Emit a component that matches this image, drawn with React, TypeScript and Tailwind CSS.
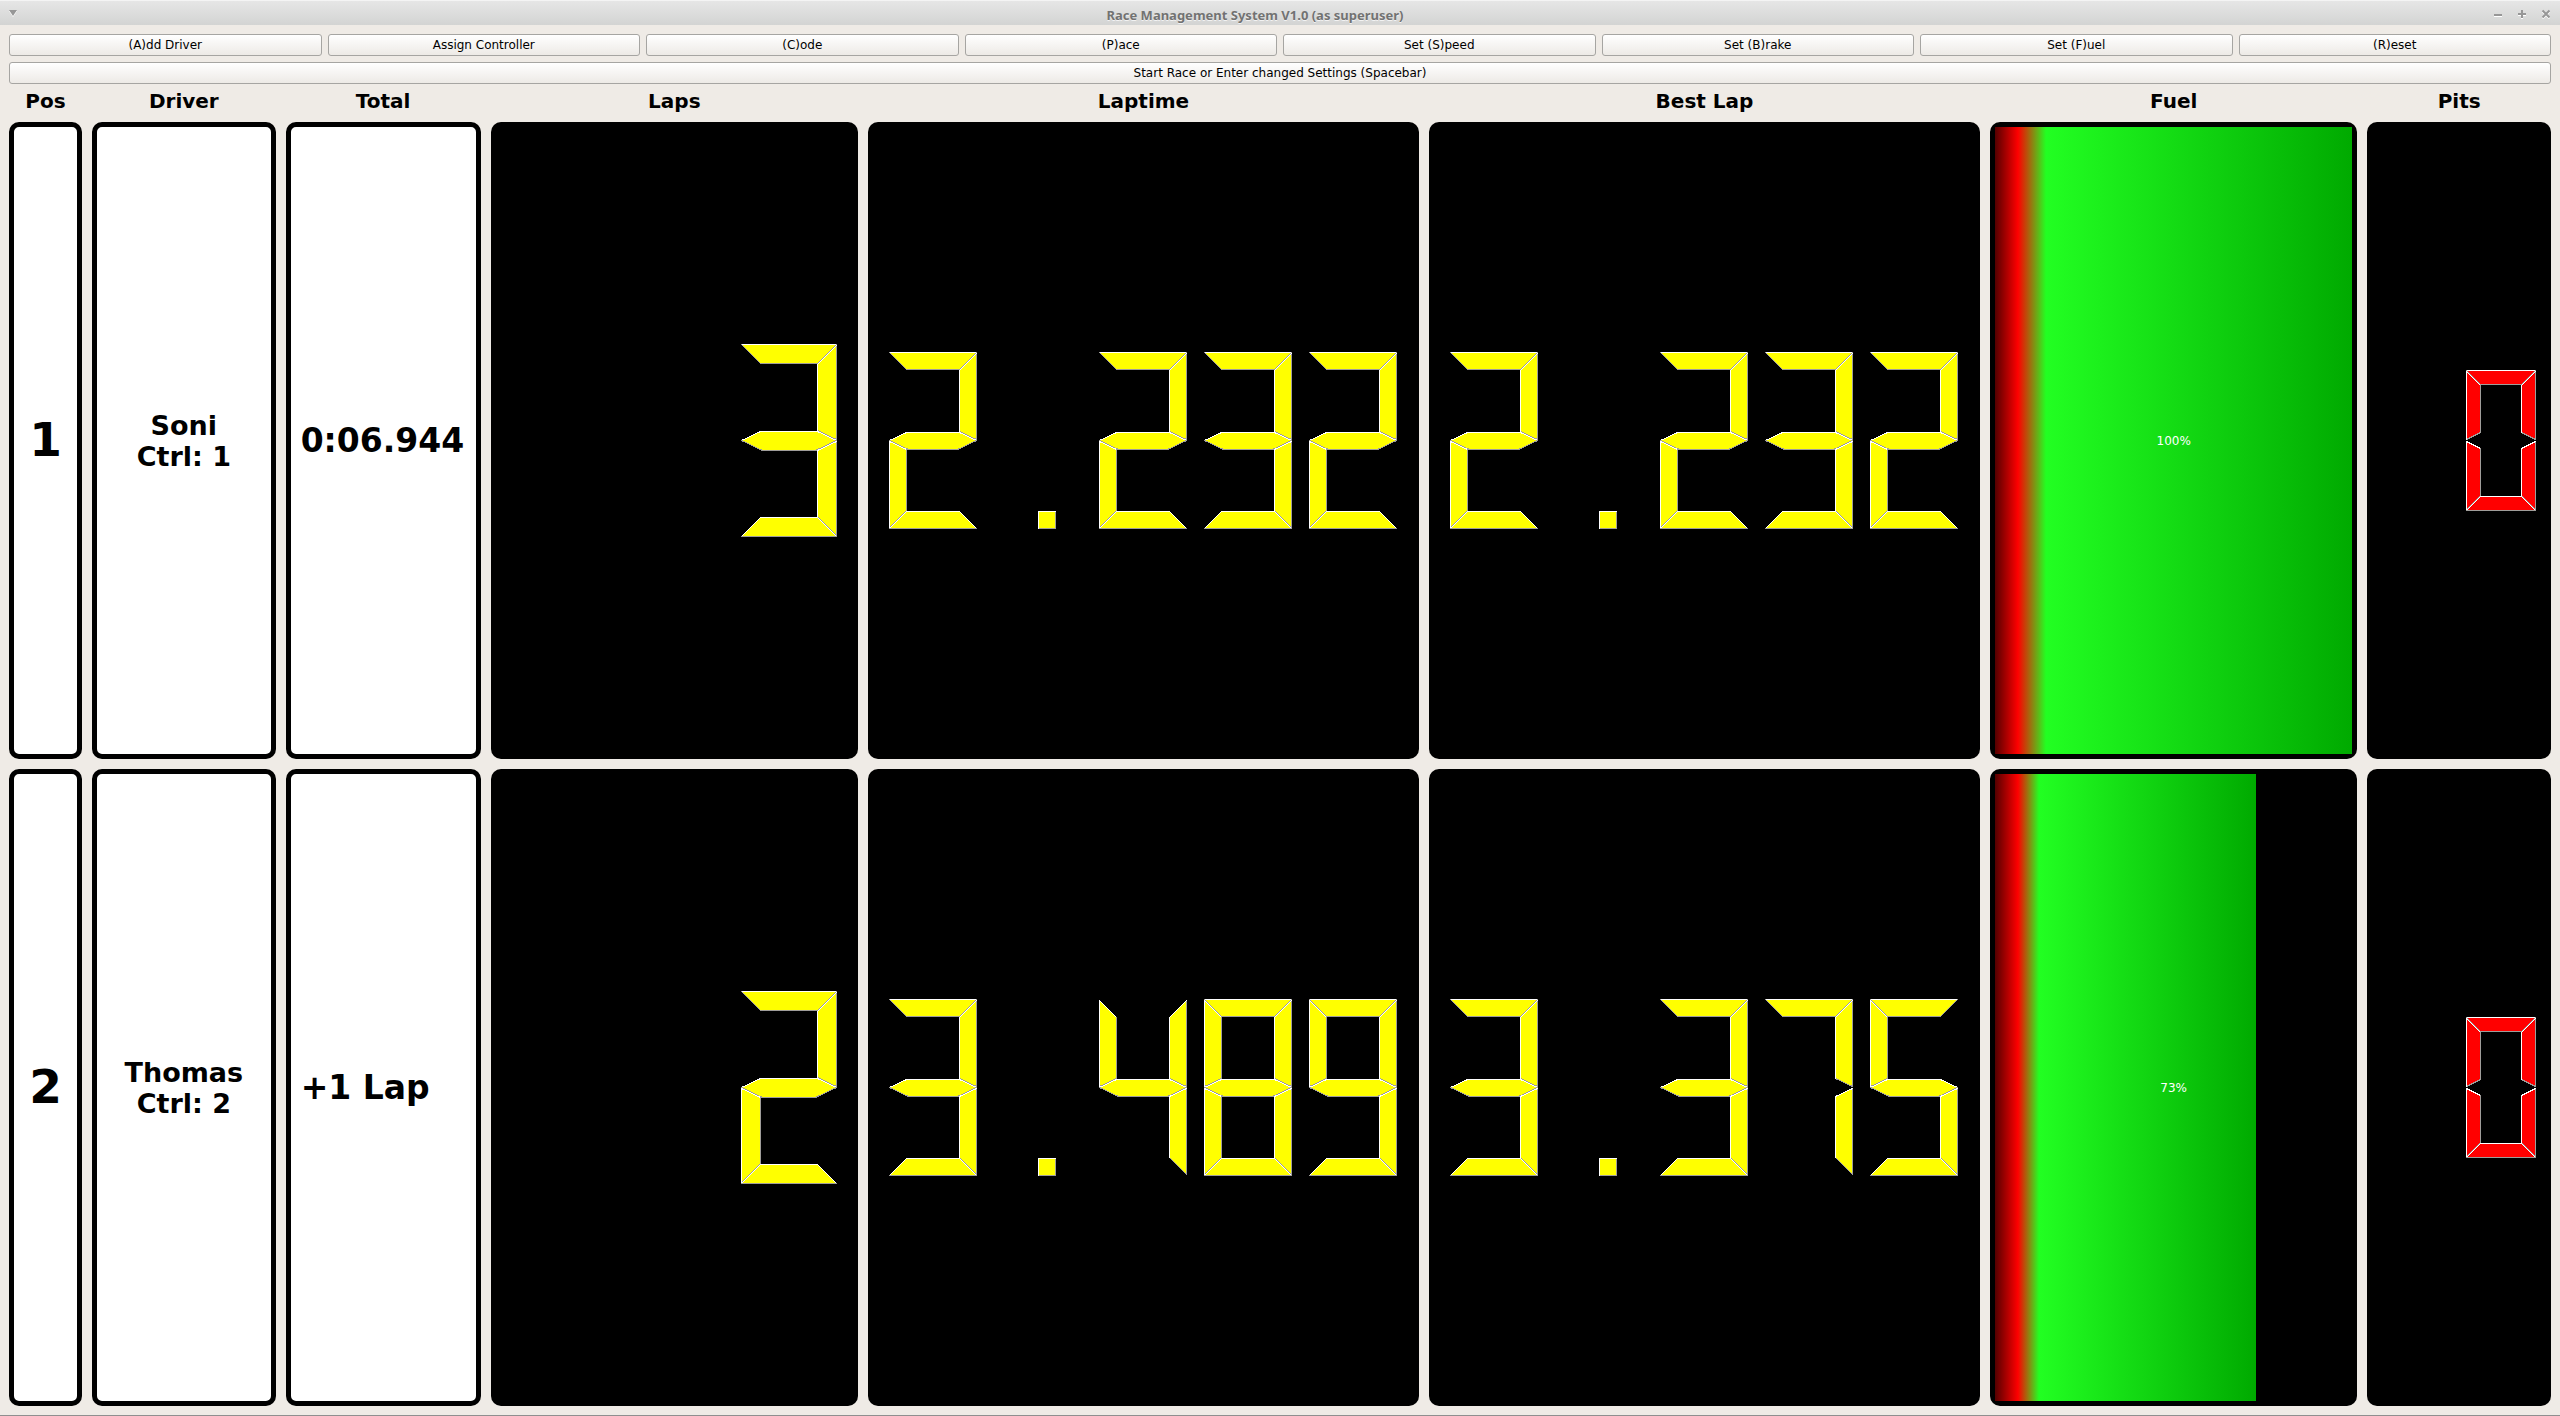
import React from 'react';

type Stroke = 'light' | 'dark';
type Point = [number, number];
type Edge = { from: Point; to: Point; tone: Stroke };

const DIGIT_SEGMENTS: Record<string, number[]> = {
  '0': [0, 1, 2, 4, 5, 6],
  '1': [2, 5],
  '2': [0, 2, 3, 4, 6],
  '3': [0, 2, 3, 5, 6],
  '4': [1, 2, 3, 5],
  '5': [0, 1, 3, 5, 6],
  '6': [0, 1, 3, 4, 5, 6],
  '7': [0, 2, 5],
  '8': [0, 1, 2, 3, 4, 5, 6],
  '9': [0, 1, 2, 3, 5, 6],
  '.': [7],
};

/* Outline of one bevelled segment: an origin followed by [x, y, edge tone]. */
function segmentShape(no: number, len: number): { origin: Point; steps: [number, number, Stroke][] } {
  const w = Math.floor(len / 5);
  const h = Math.floor(w / 2);
  switch (no) {
    case 0:
      return {
        origin: [0, 0],
        steps: [[len - 1, 0, 'light'], [len - w - 1, w, 'dark'], [w, w, 'dark'], [0, 0, 'dark']],
      };
    case 1:
      return {
        origin: [0, 1],
        steps: [[w, w, 'light'], [w, len - h - 2, 'dark'], [0, len - 2, 'dark'], [0, 0, 'light']],
      };
    case 2:
      return {
        origin: [len - 1, 1],
        steps: [[0, len - 2, 'dark'], [-w, len - h - 2, 'dark'], [-w, w, 'light'], [0, 0, 'light']],
      };
    case 3:
      return {
        origin: [0, len],
        steps: [
          [w, -h, 'light'],
          [len - w - 1, -h, 'light'],
          [len - 1, 0, 'light'],
          ...((w % 2
            ? [[len - w - 3, h + 1, 'dark'], [w + 2, h + 1, 'dark']]
            : [[len - w - 1, h, 'dark'], [w, h, 'dark']]) as [number, number, Stroke][]),
          [0, 0, 'dark'],
        ],
      };
    case 4:
      return {
        origin: [0, len + 1],
        steps: [[w, h, 'light'], [w, len - w - 2, 'dark'], [0, len - 2, 'dark'], [0, 0, 'light']],
      };
    case 5:
      return {
        origin: [len - 1, len + 1],
        steps: [[0, len - 2, 'dark'], [-w, len - w - 2, 'dark'], [-w, h, 'light'], [0, 0, 'light']],
      };
    case 6:
      return {
        origin: [0, len * 2],
        steps: [[w, -w, 'light'], [len - w - 1, -w, 'light'], [len - 1, 0, 'light'], [0, 0, 'dark']],
      };
    default:
      return {
        origin: [Math.floor(len / 2), len * 2],
        steps: [[w, 0, 'dark'], [w, -w, 'dark'], [0, -w, 'light'], [0, 0, 'light']],
      };
  }
}

function Segment({ no, len, dx }: { no: number; len: number; dx: number }) {
  const { origin, steps } = segmentShape(no, len);
  const at = (x: number, y: number): Point => [origin[0] + x + dx, origin[1] + y];
  const edges: Edge[] = [];
  let previous = at(0, 0);
  for (const [x, y, tone] of steps) {
    const next = at(x, y);
    edges.push({ from: previous, to: next, tone });
    previous = next;
  }
  return (
    <g>
      <polygon points={edges.map((e) => e.from.join(',')).join(' ')} fill="currentColor" />
      {edges.map((e, i) => (
        <line
          key={i}
          x1={e.from[0]}
          y1={e.from[1]}
          x2={e.to[0]}
          y2={e.to[1]}
          stroke={e.tone === 'light' ? '#ffffff' : '#9f9d9a'}
          strokeWidth="1"
          strokeLinecap="square"
        />
      ))}
    </g>
  );
}

/* Seven-segment read-out; blanks and the decimal point take a full digit cell. */
function Lcd({ text, len }: { text: string; len: number }) {
  const gap = Math.floor(len / 5);
  const width = text.length * (len + gap) - gap + 1;
  const height = len * 2 + 1;
  return (
    <svg
      role="img"
      aria-label={text.trim()}
      width={width}
      height={height}
      viewBox={`-0.5 -0.5 ${width} ${height}`}
      shapeRendering="crispEdges"
      className="block shrink-0"
    >
      {text.split('').map((ch, i) =>
        (DIGIT_SEGMENTS[ch] ?? []).map((no) => (
          <Segment key={`${i}-${no}`} no={no} len={len} dx={i * (len + gap)} />
        )),
      )}
    </svg>
  );
}

const ACTIONS = [
  '(A)dd Driver',
  'Assign Controller',
  '(C)ode',
  '(P)ace',
  'Set (S)peed',
  'Set (B)rake',
  'Set (F)uel',
  '(R)eset',
];

const COLUMNS = ['Pos', 'Driver', 'Total', 'Laps', 'Laptime', 'Best Lap', 'Fuel', 'Pits'];

const RACERS = [
  {
    pos: 1,
    name: 'Soni',
    ctrl: 1,
    total: '0:06.944',
    laps: '  3',
    laptime: '2.232',
    best: '2.232',
    fuel: 100,
    gradient: 'bg-[linear-gradient(to_right,#550000_0px,#ff0000_23px,#22ff22_51px,#00aa00_100%)]',
    pits: ' 0',
  },
  {
    pos: 2,
    name: 'Thomas',
    ctrl: 2,
    total: '+1 Lap',
    laps: '  2',
    laptime: '3.489',
    best: '3.375',
    fuel: 73,
    gradient: 'bg-[linear-gradient(to_right,#550000_0px,#ff0000_23px,#22ff22_44px,#00aa00_100%)]',
    pits: ' 0',
  },
];

function PushButton({ children }: { children: React.ReactNode }) {
  return (
    <button
      type="button"
      className="flex h-[22px] w-full min-w-0 items-center justify-center rounded-[3px] border border-[#a6a5a2] bg-linear-to-b from-white to-[#edeae6] text-xs leading-none text-black"
    >
      {children}
    </button>
  );
}

function TitleBar() {
  return (
    <header className="flex h-[25px] items-center border-t border-[#f4f4f4] bg-linear-to-b from-[#e6e6e6] to-[#d3d4d3]">
      <button type="button" aria-label="Window menu" className="flex w-6 justify-end pr-1.5">
        <svg width="10" height="10" viewBox="0 0 10 10">
          <path d="M1 3h8L5 9z" fill="#ffffff" />
          <path d="M1 2h8L5 8z" fill="#979797" />
        </svg>
      </button>
      <h1 className="flex-1 pt-1 text-center font-['Noto_Sans',sans-serif] text-[13px] leading-5 font-bold text-[#727272] [text-shadow:0_1px_0_#f3f3f3]">
        Race Management System V1.0 (as superuser)
      </h1>
      <div className="flex pr-0.5">
        <button type="button" aria-label="Minimize" className="flex w-6 justify-center">
          <svg width="10" height="12" viewBox="0 0 10 12">
            <path d="M1 9h8" stroke="#ffffff" strokeWidth="2" />
            <path d="M1 8h8" stroke="#979797" strokeWidth="2" />
          </svg>
        </button>
        <button type="button" aria-label="Maximize" className="flex w-6 justify-center">
          <svg width="10" height="12" viewBox="0 0 10 12">
            <path d="M1 8h8M5 4v8" stroke="#ffffff" strokeWidth="2" />
            <path d="M1 7h8M5 3v8" stroke="#979797" strokeWidth="2" />
          </svg>
        </button>
        <button type="button" aria-label="Close" className="flex w-6 justify-center">
          <svg width="10" height="12" viewBox="0 0 10 12">
            <path d="M1.5 4.5l7 7M8.5 4.5l-7 7" stroke="#ffffff" strokeWidth="2" />
            <path d="M1.5 3.5l7 7M8.5 3.5l-7 7" stroke="#979797" strokeWidth="2" />
          </svg>
        </button>
      </div>
    </header>
  );
}

const WHITE_CELL = 'flex items-center rounded-[10px] border-[5px] border-black bg-white p-0 font-bold text-black';
const LCD_CELL = 'flex items-center justify-center rounded-[10px] bg-black p-0';

function Scoreboard() {
  return (
    <table className="grid flex-1 grid-cols-[73px_1fr_195px_2fr_3fr_3fr_2fr_1fr] grid-rows-[22px_1fr_1fr] gap-[10px]">
      <thead className="contents">
        <tr className="contents">
          {COLUMNS.map((title) => (
            <th key={title} scope="col" className="p-0 text-center text-xl leading-[22px] font-bold">
              {title}
            </th>
          ))}
        </tr>
      </thead>
      <tbody className="contents">
        {RACERS.map((r) => (
          <tr key={r.pos} className="contents">
            <td className={`${WHITE_CELL} justify-center text-[47px]`}>{r.pos}</td>
            <td className={`${WHITE_CELL} flex-col justify-center text-[27px] leading-[31px]`}>
              <span>{r.name}</span>
              <span>Ctrl: {r.ctrl}</span>
            </td>
            <td className={`${WHITE_CELL} pl-[10px] text-[33px] whitespace-nowrap`}>{r.total}</td>
            <td className={`${LCD_CELL} text-[#ffff00]`}>
              <Lcd text={r.laps} len={96} />
            </td>
            <td className={`${LCD_CELL} text-[#ffff00]`}>
              <Lcd text={r.laptime} len={88} />
            </td>
            <td className={`${LCD_CELL} text-[#ffff00]`}>
              <Lcd text={r.best} len={88} />
            </td>
            <td className="grid rounded-[10px] border-[5px] border-black bg-black p-0">
              <div
                role="progressbar"
                aria-label={`Fuel of ${r.name}`}
                aria-valuenow={r.fuel}
                aria-valuemin={0}
                aria-valuemax={100}
                className="grid"
              >
                <div
                  className={`col-start-1 row-start-1 ${r.gradient}`}
                  style={{ width: `${r.fuel}%` }}
                />
                <span className="col-start-1 row-start-1 self-center text-center text-xs text-white">
                  {r.fuel}%
                </span>
              </div>
            </td>
            <td className={`${LCD_CELL} text-[#ff0000]`}>
              <Lcd text={r.pits} len={70} />
            </td>
          </tr>
        ))}
      </tbody>
    </table>
  );
}

export default function App() {
  return (
    <div className="flex min-h-screen flex-col border-b border-[#8f8f8f] bg-[#efebe6] font-['DejaVu_Sans',sans-serif] text-black">
      <TitleBar />
      <main className="flex flex-1 flex-col gap-1.5 p-[9px]">
        <div className="grid grid-cols-8 gap-1.5">
          {ACTIONS.map((label) => (
            <PushButton key={label}>{label}</PushButton>
          ))}
        </div>
        <PushButton>Start Race or Enter changed Settings (Spacebar)</PushButton>
        <Scoreboard />
      </main>
    </div>
  );
}
